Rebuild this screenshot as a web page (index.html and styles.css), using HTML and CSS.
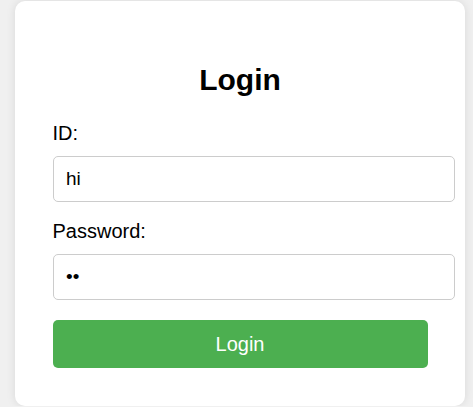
FILE: index.html
```html
<!DOCTYPE html>
<html lang="en">
<head>
<meta charset="utf-8">
<title>Login</title>
<link rel="stylesheet" href="styles.css">
</head>
<body>
  <div class="card">
    <h1 class="title">Login</h1>
    <form class="form">
      <label class="label" for="id">ID:</label>
      <input class="field" id="id" type="text" value="hi">
      <label class="label" for="pw">Password:</label>
      <input class="field" id="pw" type="password" value="ab">
      <button class="btn" type="button">Login</button>
    </form>
  </div>
</body>
</html>
```

FILE: styles.css
```css
html, body {
  margin: 0;
}
body {
  background: #f0f0f0;
  font-family: "Liberation Sans", Arial, sans-serif;
  padding: 1px 0 0 15px;
  min-height: 406px;
  box-sizing: border-box;
}
.card {
  width: 375px;
  padding: 37.5px;
  background: #fff;
  border-radius: 10px;
  box-shadow: 0 0 10px rgba(0, 0, 0, 0.1);
}
.title {
  margin: 24px 0 25.5px;
  font-size: 30px;
  line-height: 34px;
  font-weight: bold;
  text-align: center;
  color: #000;
}
.form {
  display: flex;
  flex-direction: column;
  align-items: flex-start;
}
.label {
  display: block;
  font-size: 20px;
  line-height: 23px;
  color: #000;
  margin-bottom: 11px;
}
.field {
  box-sizing: content-box;
  width: 100%;
  height: 19px;
  padding: 12.5px;
  margin: 0 0 18px;
  border: 1px solid #ccc;
  border-radius: 5px;
  font-family: "Liberation Sans", Arial, sans-serif;
  font-size: 19px;
  color: #000;
  background: #fff;
  outline: none;
}
#pw {
  margin-bottom: 20px;
}
.btn {
  width: 100%;
  height: 48px;
  border: none;
  border-radius: 5px;
  background: #4caf50;
  color: #fff;
  font-family: "Liberation Sans", Arial, sans-serif;
  font-size: 20px;
  cursor: pointer;
}
```
